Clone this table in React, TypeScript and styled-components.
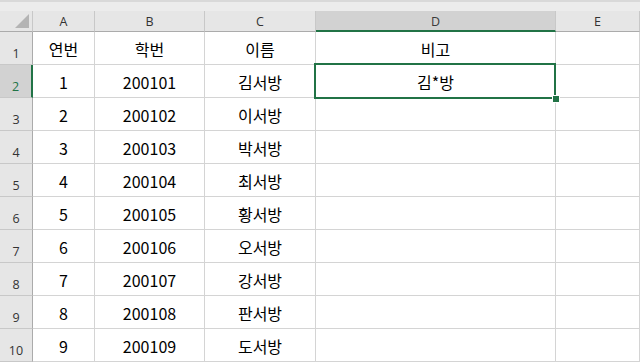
import { FC } from "react";
import styled, { createGlobalStyle } from "styled-components";

const columns = ["A", "B", "C", "D", "E"];
const colWidths = [33, 62, 110, 111, 240, 84];

const rows: string[][] = [
  ["연번", "학번", "이름", "비고", ""],
  ["1", "200101", "김서방", "김*방", ""],
  ["2", "200102", "이서방", "", ""],
  ["3", "200103", "박서방", "", ""],
  ["4", "200104", "최서방", "", ""],
  ["5", "200105", "황서방", "", ""],
  ["6", "200106", "오서방", "", ""],
  ["7", "200107", "강서방", "", ""],
  ["8", "200108", "판서방", "", ""],
  ["9", "200109", "도서방", "", ""],
];

const SELECTED_ROW = 1;
const SELECTED_COL = 3;

export default function App() {
  return (
    <>
      <GlobalStyle />
      <Sheet>
        <TopStrip />
        <Grid>
          <Corner>
            <CornerTriangle />
          </Corner>
          {columns.map((c, i) => (
            <ColHeader key={c} selected={i === SELECTED_COL}>
              {c}
            </ColHeader>
          ))}
          {rows.map((row, r) => (
            <Row key={r} index={r} cells={row} />
          ))}
        </Grid>
      </Sheet>
    </>
  );
}

const Row: FC<{ index: number; cells: string[] }> = ({ index, cells }) => (
  <>
    <RowHeader selected={index === SELECTED_ROW}>{index + 1}</RowHeader>
    {cells.map((text, c) => {
      const active = index === SELECTED_ROW && c === SELECTED_COL;
      return (
        <Cell key={c}>
          {text}
          {active && (
            <ActiveBox>
              <FillHandle />
            </ActiveBox>
          )}
        </Cell>
      );
    })}
  </>
);

const GlobalStyle = createGlobalStyle`
  html, body {
    margin: 0;
    padding: 0;
    background: #ffffff;
    overflow: hidden;
  }
`;

const Sheet = styled.div`
  width: 640px;
  height: 364px;
  overflow: hidden;
  background: #fff;
  display: flex;
  flex-direction: column;
`;

const TopStrip = styled.div`
  height: 11px;
  flex-shrink: 0;
  box-sizing: border-box;
  background: #ececec;
  border-top: 2px solid #d9d9d9;
`;

const Grid = styled.div`
  display: grid;
  grid-template-columns: ${colWidths.map((w) => `${w}px`).join(" ")};
  grid-template-rows: 21px repeat(10, 33px);
`;

const Corner = styled.div`
  position: relative;
  box-sizing: border-box;
  background: #e6e6e6;
  border-right: 1px solid #c8c8c8;
  border-bottom: 1px solid #ababab;
`;

const CornerTriangle = styled.div`
  position: absolute;
  right: 3px;
  bottom: 3px;
  width: 0;
  height: 0;
  border-left: 14px solid transparent;
  border-bottom: 14px solid #b4b4b4;
`;

const ColHeader = styled.div<{ selected?: boolean }>`
  box-sizing: border-box;
  display: flex;
  align-items: center;
  justify-content: center;
  background: ${(p) => (p.selected ? "#d2d2d2" : "#e6e6e6")};
  color: ${(p) => (p.selected ? "#3a3a3a" : "#333")};
  font-family: "Open Sans", "Noto Sans", sans-serif;
  font-size: 12.5px;
  padding-top: 1px;
  border-right: 1px solid #c8c8c8;
  border-bottom: ${(p) => (p.selected ? "2px solid #217346" : "1px solid #ababab")};
`;

const RowHeader = styled.div<{ selected?: boolean }>`
  box-sizing: border-box;
  display: flex;
  align-items: flex-end;
  justify-content: center;
  padding-bottom: 2px;
  background: ${(p) => (p.selected ? "#d2d2d2" : "#e6e6e6")};
  color: ${(p) => (p.selected ? "#217346" : "#333")};
  font-family: "Open Sans", "Noto Sans", sans-serif;
  font-size: 12.5px;
  border-bottom: 1px solid #c8c8c8;
  border-right: ${(p) => (p.selected ? "2px solid #217346" : "1px solid #ababab")};
`;

const Cell = styled.div`
  position: relative;
  box-sizing: border-box;
  display: flex;
  align-items: center;
  justify-content: center;
  border-right: 1px solid #d4d4d4;
  border-bottom: 1px solid #d4d4d4;
  color: #000;
  font-family: "Noto Sans CJK KR", "Noto Sans", sans-serif;
  font-size: 16px;
  padding-top: 1px;
`;

const ActiveBox = styled.div`
  position: absolute;
  z-index: 2;
  left: -2px;
  top: -2px;
  right: -1px;
  bottom: -2px;
  border: 2px solid #217346;
  pointer-events: none;
`;

const FillHandle = styled.div`
  position: absolute;
  right: -5px;
  bottom: -5px;
  width: 6px;
  height: 6px;
  background: #217346;
  box-shadow: 0 0 0 1px #fff;
`;
